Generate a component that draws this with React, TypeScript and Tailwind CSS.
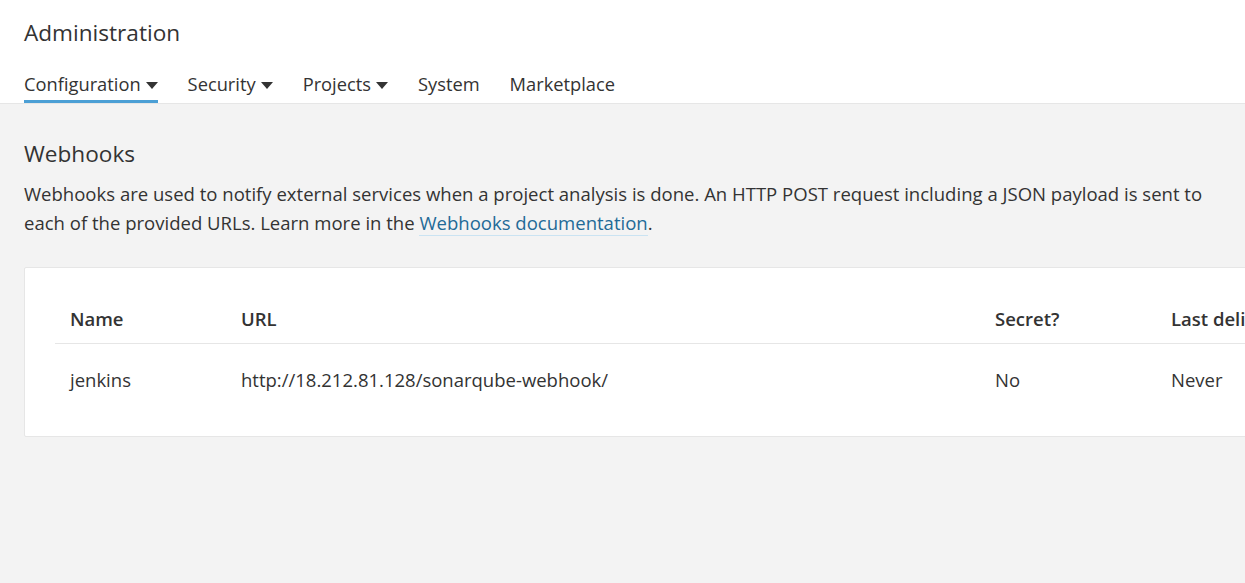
const font = { fontFamily: '"Open Sans", "Noto Sans", sans-serif' };

const navItems = [
  { label: 'Configuration', caret: true, active: true },
  { label: 'Security', caret: true },
  { label: 'Projects', caret: true },
  { label: 'System' },
  { label: 'Marketplace' },
];

function Caret() {
  return (
    <svg width="12" height="7" viewBox="0 0 12 7" className="ml-[5px] mt-[2px]">
      <path d="M0 0h12L6 7z" fill="#333" />
    </svg>
  );
}

export default function App() {
  return (
    <div className="min-h-screen w-full overflow-hidden bg-[#f3f3f3] text-[#333]" style={font}>
      {/* entête */}
      <div className="bg-white border-b border-[#e6e6e6] px-6 pt-[19px]">
        <h1 className="text-[22.6px] leading-[28px] font-normal">Administration</h1>
        <nav className="flex gap-[30px] mt-[25px]">
          {navItems.map(n => (
            <div
              key={n.label}
              className={`flex items-center pb-[4px] border-b-[3px] text-[18.3px] leading-[24px] ${
                n.active ? 'border-[#4b9fd5]' : 'border-transparent'
              }`}
            >
              {n.label}
              {n.caret && <Caret />}
            </div>
          ))}
        </nav>
      </div>

      {/* contenu */}
      <div className="px-6 pt-[36px]">
        <h2 className="text-[22.6px] leading-[28px] font-normal">Webhooks</h2>
        <p className="mt-[11px] text-[18.55px] leading-[29px] whitespace-nowrap">
          Webhooks are used to notify external services when a project analysis is done. An HTTP POST request including a JSON payload is sent to
          <br />
          each of the provided URLs. Learn more in the{' '}
          <a className="text-[#236a97] border-b border-[#cae3f2]">Webhooks documentation</a>.
        </p>

        <div className="mt-[30px] w-[1500px] bg-white border border-[#e6e6e6] rounded-[2px] pl-[30px] pt-[29px] pb-[20px]">
          <table className="table-fixed border-collapse text-[18.5px] leading-[24px]">
            <colgroup>
              <col className="w-[171px]" />
              <col className="w-[754px]" />
              <col className="w-[176px]" />
              <col className="w-[300px]" />
            </colgroup>
            <thead>
              <tr className="border-b border-[#e6e6e6]">
                {['Name', 'URL', 'Secret?', 'Last delivery'].map(h => (
                  <th key={h} className="text-left font-semibold px-[15px] pt-[10px] pb-[12px]">
                    {h}
                  </th>
                ))}
              </tr>
            </thead>
            <tbody>
              <tr>
                {['jenkins', 'http://18.212.81.128/sonarqube-webhook/', 'No', 'Never'].map(c => (
                  <td key={c} className="px-[15px] pt-[24px] pb-[24px] whitespace-nowrap">
                    {c}
                  </td>
                ))}
              </tr>
            </tbody>
          </table>
        </div>
      </div>
    </div>
  );
}
